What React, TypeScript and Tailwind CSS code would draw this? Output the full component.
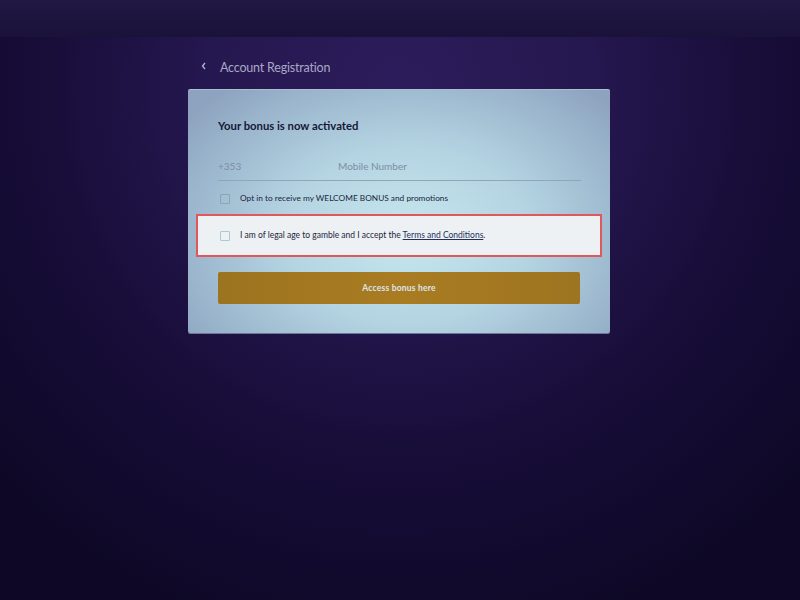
import React from "react";

export default function App() {
  return (
    <div
      className="w-[800px] h-[600px] flex flex-col overflow-hidden bg-[radial-gradient(ellipse_70%_95%_at_50%_15%,#2d1c5b_0%,#25174f_35%,#170d38_65%,#0e0826_100%)]"
      style={{ fontFamily: "Lato, 'Open Sans', sans-serif" }}
    >
      <div className="h-[37px] w-full bg-[linear-gradient(to_bottom,#211844,#1a1239)] shrink-0" />
      <div className="flex flex-col items-center mr-[2px]">
        <div className="w-[422px] flex items-center h-[30px] mt-[16px] pl-[12px]">
          <svg width="8" height="10" viewBox="0 0 8 10" className="mr-[12px] mt-[-4px]">
            <path d="M5 2 L2.5 5 L5 8" stroke="#b8b6d2" strokeWidth="1.3" fill="none" />
          </svg>
          <span className="text-[12.5px] text-[#a9a8c6] tracking-[-0.2px] mt-[1px]">Account Registration</span>
        </div>
        <div className="mt-[6px] w-[422px] h-[244px] rounded-[2px] border-t border-[#a9bdd3] shadow-[0_1px_0_#6b7895] bg-[radial-gradient(ellipse_65%_80%_at_52%_60%,#c6e6ee_0%,#b4d4e2_45%,#98b2ca_85%,#8ea3bf_100%)] flex flex-col">
          <div className="pl-[30px] pr-[29px] pt-[29px]">
            <div className="text-[11.3px] font-bold text-[#151838] leading-[14px]">Your bonus is now activated</div>
            <div className="mt-[24px] flex items-end h-[24px] border-b border-[#8fa6ba] text-[10px] text-[#7d8da6]">
              <span className="w-[120px] pb-[6px]">+353</span>
              <span className="pb-[6px]">Mobile Number</span>
            </div>
            <div className="mt-[11px] flex items-center h-[13px]">
              <div className="w-[10px] h-[10px] border border-[#8da2b6] rounded-[1px] ml-[2px] mr-[10px]" />
              <span className="text-[8.3px] text-[#1d2540]">Opt in to receive my WELCOME BONUS and promotions</span>
            </div>
          </div>
          <div className="mx-[8px] mt-[9px] h-[43px] border-2 border-[#e0585b] bg-[#edf1f3] flex items-center pl-[22px]">
            <div className="w-[10px] h-[10px] border border-[#a7c9d8] rounded-[1px] mr-[10px]" />
            <span className="text-[8.5px] text-[#1d2540]">
              I am of legal age to gamble and I accept the{" "}
              <span className="underline text-[#24305a]">Terms and Conditions</span>.
            </span>
          </div>
          <div className="mx-[30px] mt-[15px] h-[32px] rounded-[2px] bg-[linear-gradient(to_right,#9c731f,#a97c22_50%,#9d7420)] flex items-center justify-center">
            <span className="text-[8.5px] font-bold text-[#dbe6ee] tracking-[0.2px]">Access bonus here</span>
          </div>
        </div>
      </div>
    </div>
  );
}
